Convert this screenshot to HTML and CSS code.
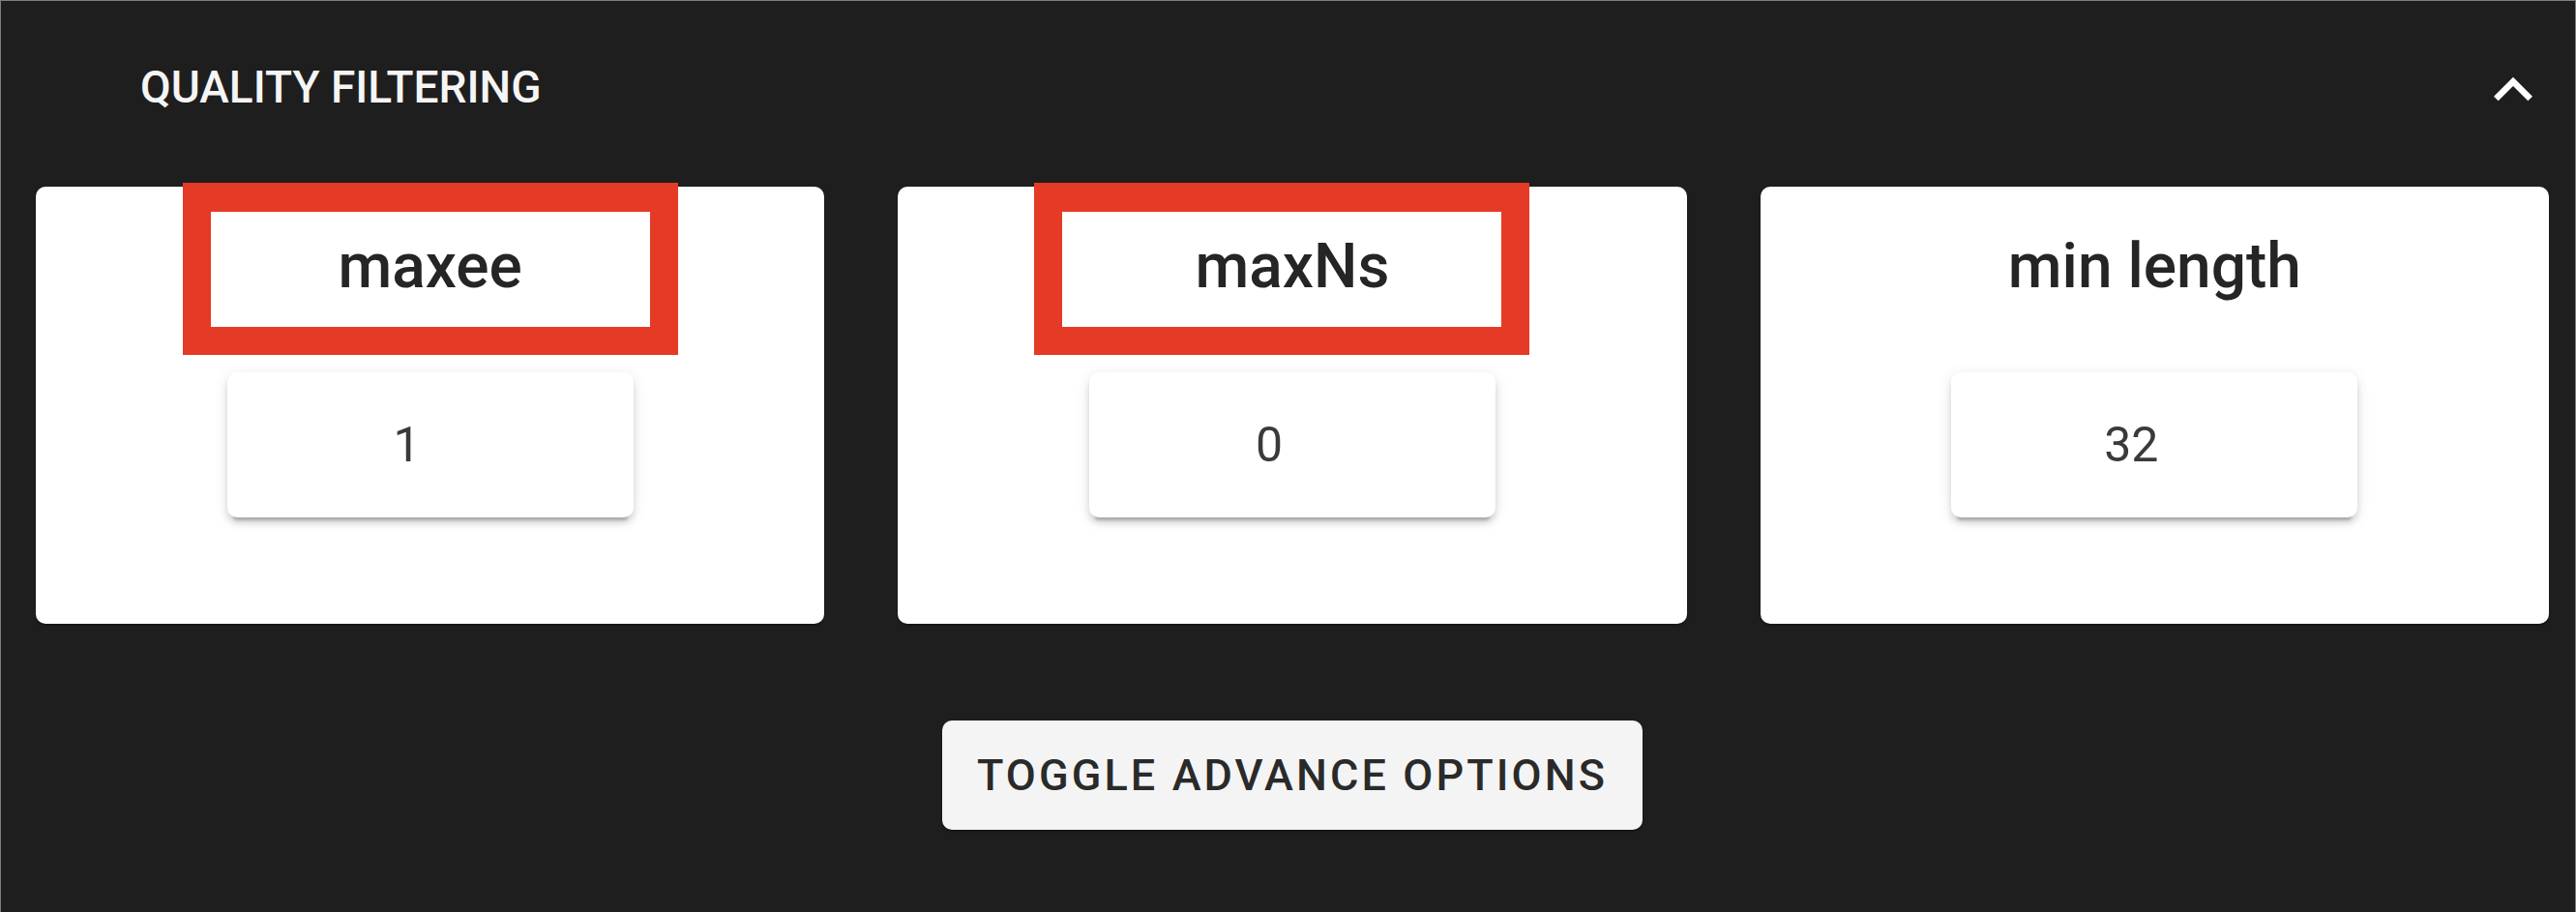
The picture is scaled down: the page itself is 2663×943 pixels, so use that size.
FILE: index.html
```html
<!DOCTYPE html>
<html lang="en">
<head>
<meta charset="utf-8">
<title>Quality Filtering</title>
<link rel="stylesheet" href="styles.css">
</head>
<body>
<div class="panel">
  <div class="panel-header">
    <span class="panel-title">QUALITY FILTERING</span>
    <svg class="chevron" viewBox="0 0 24 24" aria-hidden="true"><path d="M12 8l-6 6 1.41 1.41L12 10.83l4.59 4.58L18 14z"/></svg>
  </div>
  <div class="cards">
    <div class="card">
      <div class="card-title">maxee</div>
      <div class="field"><span class="field-value">1</span></div>
      <div class="highlight highlight-one"></div>
    </div>
    <div class="card">
      <div class="card-title">maxNs</div>
      <div class="field"><span class="field-value">0</span></div>
      <div class="highlight highlight-two"></div>
    </div>
    <div class="card">
      <div class="card-title">min length</div>
      <div class="field"><span class="field-value">32</span></div>
    </div>
  </div>
  <div class="actions">
    <button class="toggle">TOGGLE ADVANCE OPTIONS</button>
  </div>
</div>
</body>
</html>
```

FILE: styles.css
```css
* {
  box-sizing: border-box;
}

html, body {
  margin: 0;
  padding: 0;
  background: #1e1e1e;
}

body {
  width: 2663px;
  height: 943px;
  overflow: hidden;
  font-family: Roboto, "Liberation Sans", sans-serif;
}

.panel {
  height: 943px;
  background: #1e1e1e;
  border-top: 1px solid #7d7d7d;
  border-left: 1px solid #7d7d7d;
  border-right: 1px solid #7d7d7d;
}

.panel-header {
  display: flex;
  justify-content: space-between;
  align-items: flex-start;
  height: 192px;
  padding: 52px 24px 0 144px;
}

.panel-title {
  margin-top: 14px;
  font-size: 46px;
  line-height: 46px;
  font-weight: 500;
  color: #f5f5f5;
}

.chevron {
  width: 80px;
  height: 80px;
  fill: #ffffff;
}

.cards {
  display: grid;
  grid-template-columns: repeat(3, 1fr);
  column-gap: 76px;
  padding: 0 27px 0 36px;
}

.card {
  position: relative;
  height: 452px;
  background: #ffffff;
  border-radius: 10px;
  padding-top: 51px;
  display: flex;
  flex-direction: column;
  align-items: center;
  box-shadow: 0 2px 2px rgba(0, 0, 0, 0.25);
}

.card-title {
  font-size: 64px;
  line-height: 64px;
  font-weight: 500;
  color: #252525;
}

.field {
  margin-top: 77px;
  width: 420px;
  height: 150px;
  background: #ffffff;
  border-radius: 10px;
  display: flex;
  align-items: center;
  justify-content: center;
  padding-right: 48px;
  box-shadow: 0 9px 3px -6px rgba(0, 0, 0, 0.2), 0 6px 6px rgba(0, 0, 0, 0.12), 0 3px 15px rgba(0, 0, 0, 0.1);
}

.field-value {
  font-size: 50px;
  line-height: 56px;
  font-weight: 400;
  color: #3a3a3a;
}

.highlight {
  position: absolute;
  top: -4px;
  width: 512px;
  height: 178px;
  border: 29px solid #e53b26;
  border-top-width: 30px;
}

.highlight-one {
  left: 152px;
}

.highlight-two {
  left: 141px;
}

.actions {
  display: flex;
  justify-content: center;
  padding: 0 27px 0 36px;
  margin-top: 100px;
}

.toggle {
  height: 113px;
  padding: 0 36px;
  border: none;
  border-radius: 10px;
  background: #f4f4f4;
  font-family: Roboto, "Liberation Sans", sans-serif;
  font-size: 45px;
  font-weight: 500;
  letter-spacing: 3.1px;
  color: #2a2a2a;
  box-shadow: 0 2px 2px rgba(0, 0, 0, 0.3);
}
```
